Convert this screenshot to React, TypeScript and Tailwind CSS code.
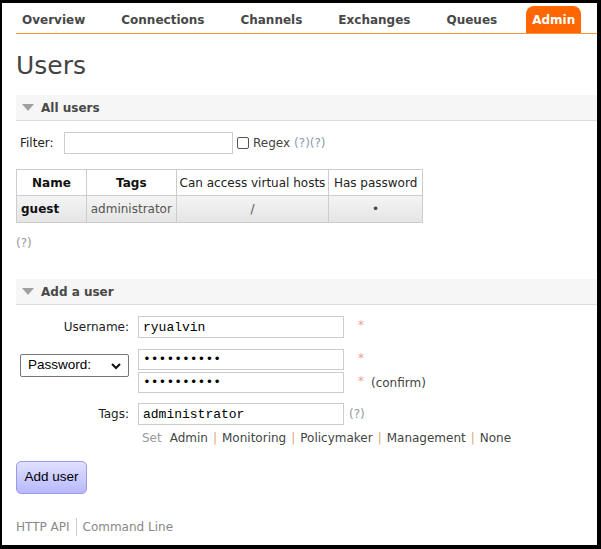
import React from "react";

const navItems = ["Overview", "Connections", "Channels", "Exchanges", "Queues"];

function SectionBar({ title }: { title: string }) {
  return (
    <div className="flex h-[26px] items-center border-b border-[#dcdcdc] bg-[#f6f6f6]">
      <svg width="12" height="7" viewBox="0 0 12 7" className="ml-[6px]">
        <path d="M0 0 L12 0 L6 7 Z" fill="#a0a0a0" />
      </svg>
      <span className="ml-[7px] text-[12px] font-bold text-[#484848]">{title}</span>
    </div>
  );
}

const mono = { fontFamily: '"Liberation Mono", "Courier New", monospace' };
const arial = { fontFamily: '"Liberation Sans", Arial, sans-serif' };

export default function App() {
  return (
    <div
      className="h-[549px] w-[601px] overflow-hidden border-b-4 border-l-2 border-r-4 border-t-[3px] border-black bg-white text-[12px] text-[#444]"
      style={{ fontFamily: '"DejaVu Sans", Verdana, sans-serif' }}
    >
      <div className="pl-[14px]">
        {/* Menu */}
        <ul className="mt-[3px] flex h-[28px] items-end gap-[24px] border-b border-[#f7923a]">
          {navItems.map((n) => (
            <li key={n} className="flex h-[27px] items-center px-[6px] text-[12px] font-bold text-[#484848]">
              {n}
            </li>
          ))}
          <li className="-ml-[1px] flex h-[27px] items-center rounded-t-[8px] bg-[#ff6600] px-[6px] text-[12px] font-bold text-white">
            Admin
          </li>
        </ul>

        <h1 className="mt-[16px] text-[25px] leading-[32px] text-[#444]">Users</h1>

        <div className="mt-[13px]">
          <SectionBar title="All users" />
        </div>

        {/* Filter */}
        <div className="mt-[11px] flex h-[22px] items-center">
          <span className="ml-[4px] w-[44px] text-[#222]">Filter:</span>
          <input className="h-[22px] w-[169px] border border-[#ccc] outline-none" />
          <span className="ml-[4px] h-[12px] w-[12px] rounded-[2px] border border-[#555] bg-white" />
          <span className="ml-[4px] text-[#444]">Regex</span>
          <span className="ml-[4px] text-[#8a9ab0]">(?)(?)</span>
        </div>

        {/* Users table */}
        <table className="mt-[15px] w-[407px] border-collapse text-[12px]">
          <thead>
            <tr className="h-[26px]">
              <th className="w-[70px] border border-[#ccc] bg-white font-bold text-[#111]">Name</th>
              <th className="w-[90px] border border-[#ccc] bg-white font-bold text-[#111]">Tags</th>
              <th className="w-[153px] border border-[#ccc] bg-white font-normal text-[#222]">Can access virtual hosts</th>
              <th className="w-[94px] border border-[#ccc] bg-white font-normal text-[#222]">Has password</th>
            </tr>
          </thead>
          <tbody>
            <tr className="h-[27px] bg-gradient-to-b from-[#f4f4f4] to-[#e4e4e4]">
              <td className="border border-[#ccc] pl-[4px] font-bold text-[#111]">guest</td>
              <td className="border border-[#ccc] text-center text-[#555]">administrator</td>
              <td className="border border-[#ccc] text-center text-[#555]">/</td>
              <td className="border border-[#ccc] text-center text-[#444]">•</td>
            </tr>
          </tbody>
        </table>

        <div className="mt-[11px] h-[18px] text-[#999]">(?)</div>

        <div className="mt-[27px]">
          <SectionBar title="Add a user" />
        </div>

        {/* Add user form */}
        <div className="mt-[11px] flex flex-col">
          <div className="flex h-[22px] items-center">
            <span className="w-[113px] text-right text-[#222]">Username:</span>
            <input
              readOnly
              value="ryualvin"
              className="ml-[9px] h-[22px] w-[206px] border border-[#ccc] pl-[4px] text-[13px] text-black outline-none"
              style={mono}
            />
            <span className="ml-[14px] self-start text-[#f59a9a]">*</span>
          </div>

          <div className="mt-[11px] flex">
            <div className="flex w-[113px] items-start pl-[4px]">
              <div
                className="relative mt-[5px] flex h-[23px] w-[109px] items-center rounded-[2px] border border-[#767676] bg-white pl-[7px] text-[13.5px] text-black"
                style={arial}
              >
                Password:
                <svg width="10" height="7" viewBox="0 0 10 7" className="absolute right-[7px] top-[8px]">
                  <path d="M1 1 L5 5 L9 1" fill="none" stroke="#111" strokeWidth="2" />
                </svg>
              </div>
            </div>
            <div className="ml-[9px] flex flex-col gap-[2px]">
              <div className="flex items-start">
                <input
                  readOnly
                  value="••••••••••"
                  className="h-[21px] w-[206px] border border-[#ccc] pl-[4px] text-[13px] text-black outline-none"
                  style={mono}
                />
                <span className="ml-[14px] text-[#f59a9a]">*</span>
              </div>
              <div className="flex items-center">
                <input
                  readOnly
                  value="••••••••••"
                  className="h-[21px] w-[206px] border border-[#ccc] pl-[4px] text-[13px] text-black outline-none"
                  style={mono}
                />
                <span className="ml-[14px] self-start text-[#f59a9a]">*</span>
                <span className="ml-[7px] text-[#444]">(confirm)</span>
              </div>
            </div>
          </div>

          <div className="mt-[10px] flex h-[22px] items-center">
            <span className="w-[113px] text-right text-[#222]">Tags:</span>
            <input
              readOnly
              value="administrator"
              className="ml-[9px] h-[22px] w-[206px] border border-[#ccc] pl-[4px] text-[13px] text-black outline-none"
              style={mono}
            />
            <span className="ml-[5px] text-[#999]">(?)</span>
          </div>

          <div className="ml-[126px] mt-[4px] flex h-[18px] items-center gap-[5px]">
            <span className="text-[#999]">Set</span>
            <span className="ml-[3px] text-[#444]">Admin</span>
            <span className="text-[#d9a870]">|</span>
            <span className="text-[#444]">Monitoring</span>
            <span className="text-[#d9a870]">|</span>
            <span className="text-[#444]">Policymaker</span>
            <span className="text-[#d9a870]">|</span>
            <span className="text-[#444]">Management</span>
            <span className="text-[#d9a870]">|</span>
            <span className="text-[#444]">None</span>
          </div>
        </div>

        <button
          className="mt-[14px] flex h-[33px] w-[71px] items-center justify-center rounded-[5px] border border-[#9a9ae6] bg-gradient-to-b from-[#e0e0ff] to-[#b8b8ff] text-[13.5px] text-black"
          style={arial}
        >
          Add user
        </button>

        {/* Footer */}
        <div className="mt-[23px] flex h-[20px] items-center text-[#888]">
          <span>HTTP API</span>
          <span className="mx-[6px] h-[18px] w-px bg-[#ccc]" />
          <span>Command Line</span>
        </div>
      </div>
    </div>
  );
}
